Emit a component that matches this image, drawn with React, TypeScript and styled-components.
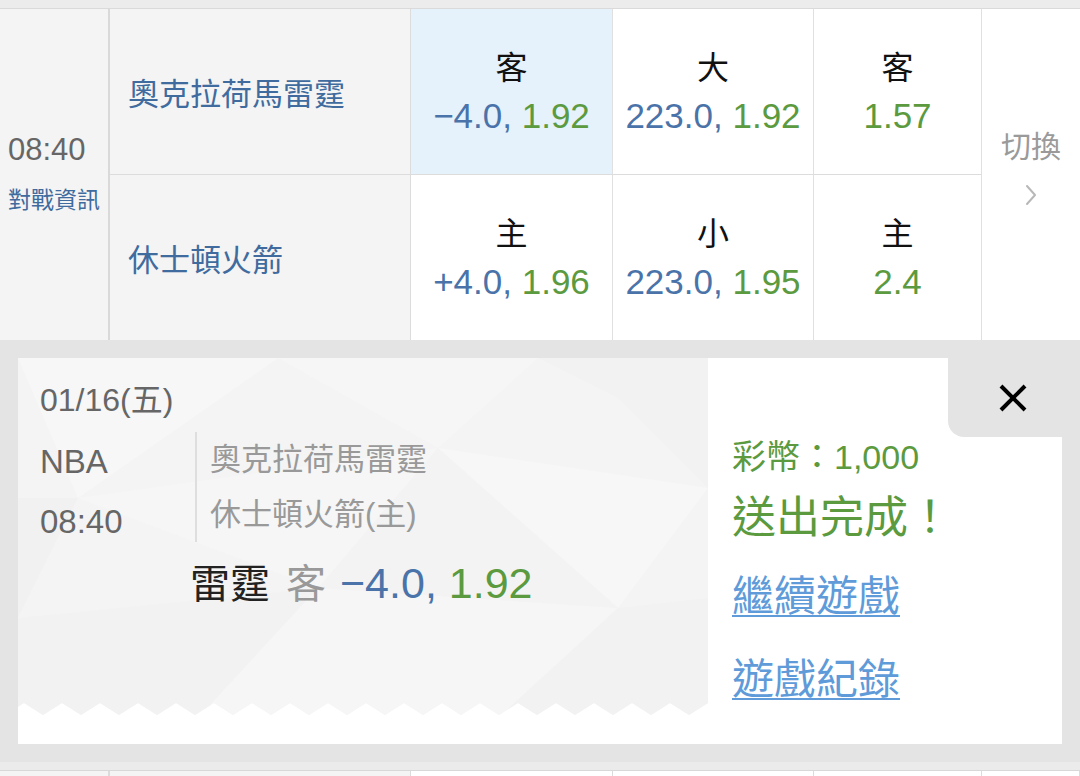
import React from "react";
import styled, { createGlobalStyle } from "styled-components";

const GlobalStyle = createGlobalStyle`
  html, body { margin: 0; padding: 0; background: #ececec; }
  body {
    font-family: "Liberation Sans", "Noto Sans CJK TC", sans-serif;
    overflow: hidden;
  }
  * { box-sizing: border-box; }
`;

const Page = styled.div`
  width: 1080px;
  height: 776px;
  overflow: hidden;
  padding-top: 8px;
  background: #ececec;
`;

const MatchGrid = styled.div`
  display: grid;
  grid-template-columns: 110px 301px 202px 201px 168px 98px;
  grid-template-rows: 166px 165px;
  border-top: 1px solid #dadada;
  background: #fff;
`;

const TimeCell = styled.div`
  grid-row: 1 / span 2;
  background: #f4f4f4;
  border-right: 2px solid #d9d9d9;
  display: flex;
  flex-direction: column;
  justify-content: center;
  padding-left: 8px;
`;

const TimeText = styled.div`
  font-size: 31px;
  line-height: 50px;
  color: #666;
`;

const InfoLink = styled.div`
  font-size: 23px;
  line-height: 50px;
  color: #3f6b9e;
  white-space: nowrap;
`;

const TeamCell = styled.div<{ $top?: boolean }>`
  background: #f4f4f4;
  border-right: 1px solid #dcdcdc;
  border-bottom: ${(p) => (p.$top ? "1px solid #dcdcdc" : "none")};
  display: flex;
  align-items: center;
  padding-left: 18px;
  font-size: 31px;
  color: #3f6b9e;
`;

const OddsCell = styled.div<{ $top?: boolean; $active?: boolean }>`
  background: ${(p) => (p.$active ? "#e5f1fb" : "#fff")};
  border-right: 1px solid #e0e0e0;
  border-bottom: ${(p) => (p.$top ? "1px solid #dcdcdc" : "none")};
  display: flex;
  flex-direction: column;
  align-items: center;
  justify-content: center;
  text-align: center;
  white-space: nowrap;
`;

const OddsLabel = styled.div`
  font-size: 32px;
  line-height: 48px;
  color: #111;
`;

const OddsValue = styled.div`
  font-size: 35px;
  line-height: 48px;
`;

const Blue = styled.span`
  color: #4a73a9;
`;

const Green = styled.span`
  color: #5b9a3e;
`;

const SwitchCell = styled.div`
  grid-row: 1 / span 2;
  grid-column: 6;
  background: #fff;
  display: flex;
  flex-direction: column;
  align-items: center;
  justify-content: center;
  padding-bottom: 14px;
  gap: 18px;
`;

const SwitchText = styled.div`
  font-size: 30px;
  line-height: 36px;
  color: #9a9a9a;
`;

const BetPanel = styled.div`
  background: #e4e4e4;
  padding: 18px 18px;
  border-bottom: 8px solid #ebebeb;
`;

const Ticket = styled.div`
  display: grid;
  grid-template-columns: 690px 1fr;
  height: 386px;
  background: #fff;
`;

const TicketLeft = styled.div`
  position: relative;
  padding: 18px 0 0 22px;
`;

const Pattern = styled.svg`
  position: absolute;
  left: 0;
  top: 0;
  z-index: 0;
`;

const LeftContent = styled.div`
  position: relative;
  z-index: 1;
  color: #666;
`;

const DateLine = styled.div`
  font-size: 32px;
  line-height: 48px;
`;

const MatchRow = styled.div`
  display: flex;
  align-items: flex-start;
  margin-top: 8px;
`;

const MetaCol = styled.div`
  width: 155px;
  font-size: 33px;
  line-height: 60px;
`;

const TeamsCol = styled.div`
  border-left: 2px solid #dedede;
  padding-left: 13px;
  font-size: 31px;
  line-height: 55px;
  color: #999;
  white-space: nowrap;
`;

const PickLine = styled.div`
  margin-left: 150px;
  margin-top: 3px;
  font-size: 40px;
  line-height: 56px;
  white-space: nowrap;
`;

const PickTeam = styled.span`
  color: #222;
  margin-right: 16px;
`;

const PickSide = styled.span`
  color: #999;
  margin-right: 14px;
`;

const PickOdds = styled.span`
  font-size: 43px;
`;

const TicketRight = styled.div`
  position: relative;
  display: flex;
  flex-direction: column;
  align-items: flex-start;
  padding: 77px 0 0 24px;
`;

const CloseTab = styled.div`
  position: absolute;
  top: 0;
  right: 0;
  width: 114px;
  height: 79px;
  background: #e4e4e4;
  border-bottom-left-radius: 16px;
  display: flex;
  align-items: center;
  justify-content: center;
  padding-left: 16px;
`;

const Coins = styled.div`
  font-size: 34px;
  line-height: 44px;
  color: #5b9a3e;
`;

const Done = styled.div`
  font-size: 44px;
  line-height: 60px;
  margin-top: 9px;
  color: #5b9a3e;
`;

const ActionLink = styled.a<{ $gap: number }>`
  font-size: 42px;
  line-height: 60px;
  margin-top: ${(p) => p.$gap}px;
  color: #5f9bd9;
  text-decoration: underline;
  text-decoration-thickness: 2px;
  text-underline-offset: 4px;
  cursor: pointer;
`;

const NextRow = styled.div`
  display: grid;
  grid-template-columns: 110px 301px 202px 201px 168px 98px;
  height: 6px;
  border-top: 1px solid #d8d8d8;
`;

const NextCell = styled.div<{ $shade?: boolean; $thick?: boolean }>`
  background: ${(p) => (p.$shade ? "#f4f4f4" : "#fff")};
  border-right: ${(p) => (p.$thick ? "2px" : "1px")} solid #dcdcdc;
`;

function Chevron() {
  return (
    <svg width="14" height="24" viewBox="0 0 14 24">
      <polyline points="3,3 11,12 3,21" fill="none" stroke="#b8b8b8" strokeWidth="2" strokeLinecap="round" strokeLinejoin="round" />
    </svg>
  );
}

function CloseIcon() {
  return (
    <svg width="30" height="30" viewBox="0 0 30 30">
      <line x1="3" y1="3" x2="27" y2="27" stroke="#000" strokeWidth="4" />
      <line x1="27" y1="3" x2="3" y2="27" stroke="#000" strokeWidth="4" />
    </svg>
  );
}

function TicketPattern() {
  const w = 690;
  const top = 345;
  const bot = 357;
  const period = 38;
  const pts: string[] = [`0,0`, `${w},0`, `${w},${top}`];
  for (let x = w; x > 0; x -= period) {
    pts.push(`${x - period / 2},${bot}`);
    pts.push(`${Math.max(0, x - period)},${top}`);
  }
  const base = pts.join(" ");
  return (
    <Pattern width={w} height={360} viewBox={`0 0 ${w} 360`}>
      <defs>
        <clipPath id="zig">
          <polygon points={base} />
        </clipPath>
      </defs>
      <polygon points={base} fill="#f4f4f4" />
      <g clipPath="url(#zig)">
        <polygon points="0,0 260,0 60,140" fill="#f7f7f7" />
        <polygon points="0,140 60,140 0,260" fill="#f1f1f1" />
        <polygon points="260,0 520,0 420,90" fill="#f6f6f6" />
        <polygon points="520,0 690,0 690,130 600,40" fill="#f2f2f2" />
        <polygon points="60,140 420,90 300,230" fill="#f6f6f6" />
        <polygon points="420,90 690,130 600,250" fill="#f7f7f7" />
        <polygon points="0,260 300,230 180,360 0,360" fill="#f2f2f2" />
        <polygon points="300,230 600,250 480,360 180,360" fill="#f6f6f6" />
        <polygon points="600,250 690,240 690,360 480,360" fill="#f2f2f2" />
        <polygon points="420,90 600,250 300,230" fill="#f3f3f3" />
      </g>
    </Pattern>
  );
}

export default function App() {
  return (
    <>
      <GlobalStyle />
      <Page>
        <MatchGrid>
          <TimeCell>
            <TimeText>08:40</TimeText>
            <InfoLink>對戰資訊</InfoLink>
          </TimeCell>
          <TeamCell $top>奧克拉荷馬雷霆</TeamCell>
          <OddsCell $top $active>
            <OddsLabel>客</OddsLabel>
            <OddsValue>
              <Blue>−4.0, </Blue>
              <Green>1.92</Green>
            </OddsValue>
          </OddsCell>
          <OddsCell $top>
            <OddsLabel>大</OddsLabel>
            <OddsValue>
              <Blue>223.0, </Blue>
              <Green>1.92</Green>
            </OddsValue>
          </OddsCell>
          <OddsCell $top>
            <OddsLabel>客</OddsLabel>
            <OddsValue>
              <Green>1.57</Green>
            </OddsValue>
          </OddsCell>
          <SwitchCell>
            <SwitchText>切換</SwitchText>
            <Chevron />
          </SwitchCell>
          <TeamCell>休士頓火箭</TeamCell>
          <OddsCell>
            <OddsLabel>主</OddsLabel>
            <OddsValue>
              <Blue>+4.0, </Blue>
              <Green>1.96</Green>
            </OddsValue>
          </OddsCell>
          <OddsCell>
            <OddsLabel>小</OddsLabel>
            <OddsValue>
              <Blue>223.0, </Blue>
              <Green>1.95</Green>
            </OddsValue>
          </OddsCell>
          <OddsCell>
            <OddsLabel>主</OddsLabel>
            <OddsValue>
              <Green>2.4</Green>
            </OddsValue>
          </OddsCell>
        </MatchGrid>

        <BetPanel>
          <Ticket>
            <TicketLeft>
              <TicketPattern />
              <LeftContent>
                <DateLine>01/16(五)</DateLine>
                <MatchRow>
                  <MetaCol>
                    <div>NBA</div>
                    <div>08:40</div>
                  </MetaCol>
                  <TeamsCol>
                    <div>奧克拉荷馬雷霆</div>
                    <div>休士頓火箭(主)</div>
                  </TeamsCol>
                </MatchRow>
                <PickLine>
                  <PickTeam>雷霆</PickTeam>
                  <PickSide>客</PickSide>
                  <PickOdds>
                    <Blue>−4.0, </Blue>
                    <Green>1.92</Green>
                  </PickOdds>
                </PickLine>
              </LeftContent>
            </TicketLeft>
            <TicketRight>
              <CloseTab>
                <CloseIcon />
              </CloseTab>
              <Coins>彩幣：1,000</Coins>
              <Done>送出完成！</Done>
              <ActionLink $gap={19}>繼續遊戲</ActionLink>
              <ActionLink $gap={23}>遊戲紀錄</ActionLink>
            </TicketRight>
          </Ticket>
        </BetPanel>

        <NextRow>
          <NextCell $shade $thick />
          <NextCell $shade />
          <NextCell />
          <NextCell />
          <NextCell />
          <NextCell />
        </NextRow>
      </Page>
    </>
  );
}
